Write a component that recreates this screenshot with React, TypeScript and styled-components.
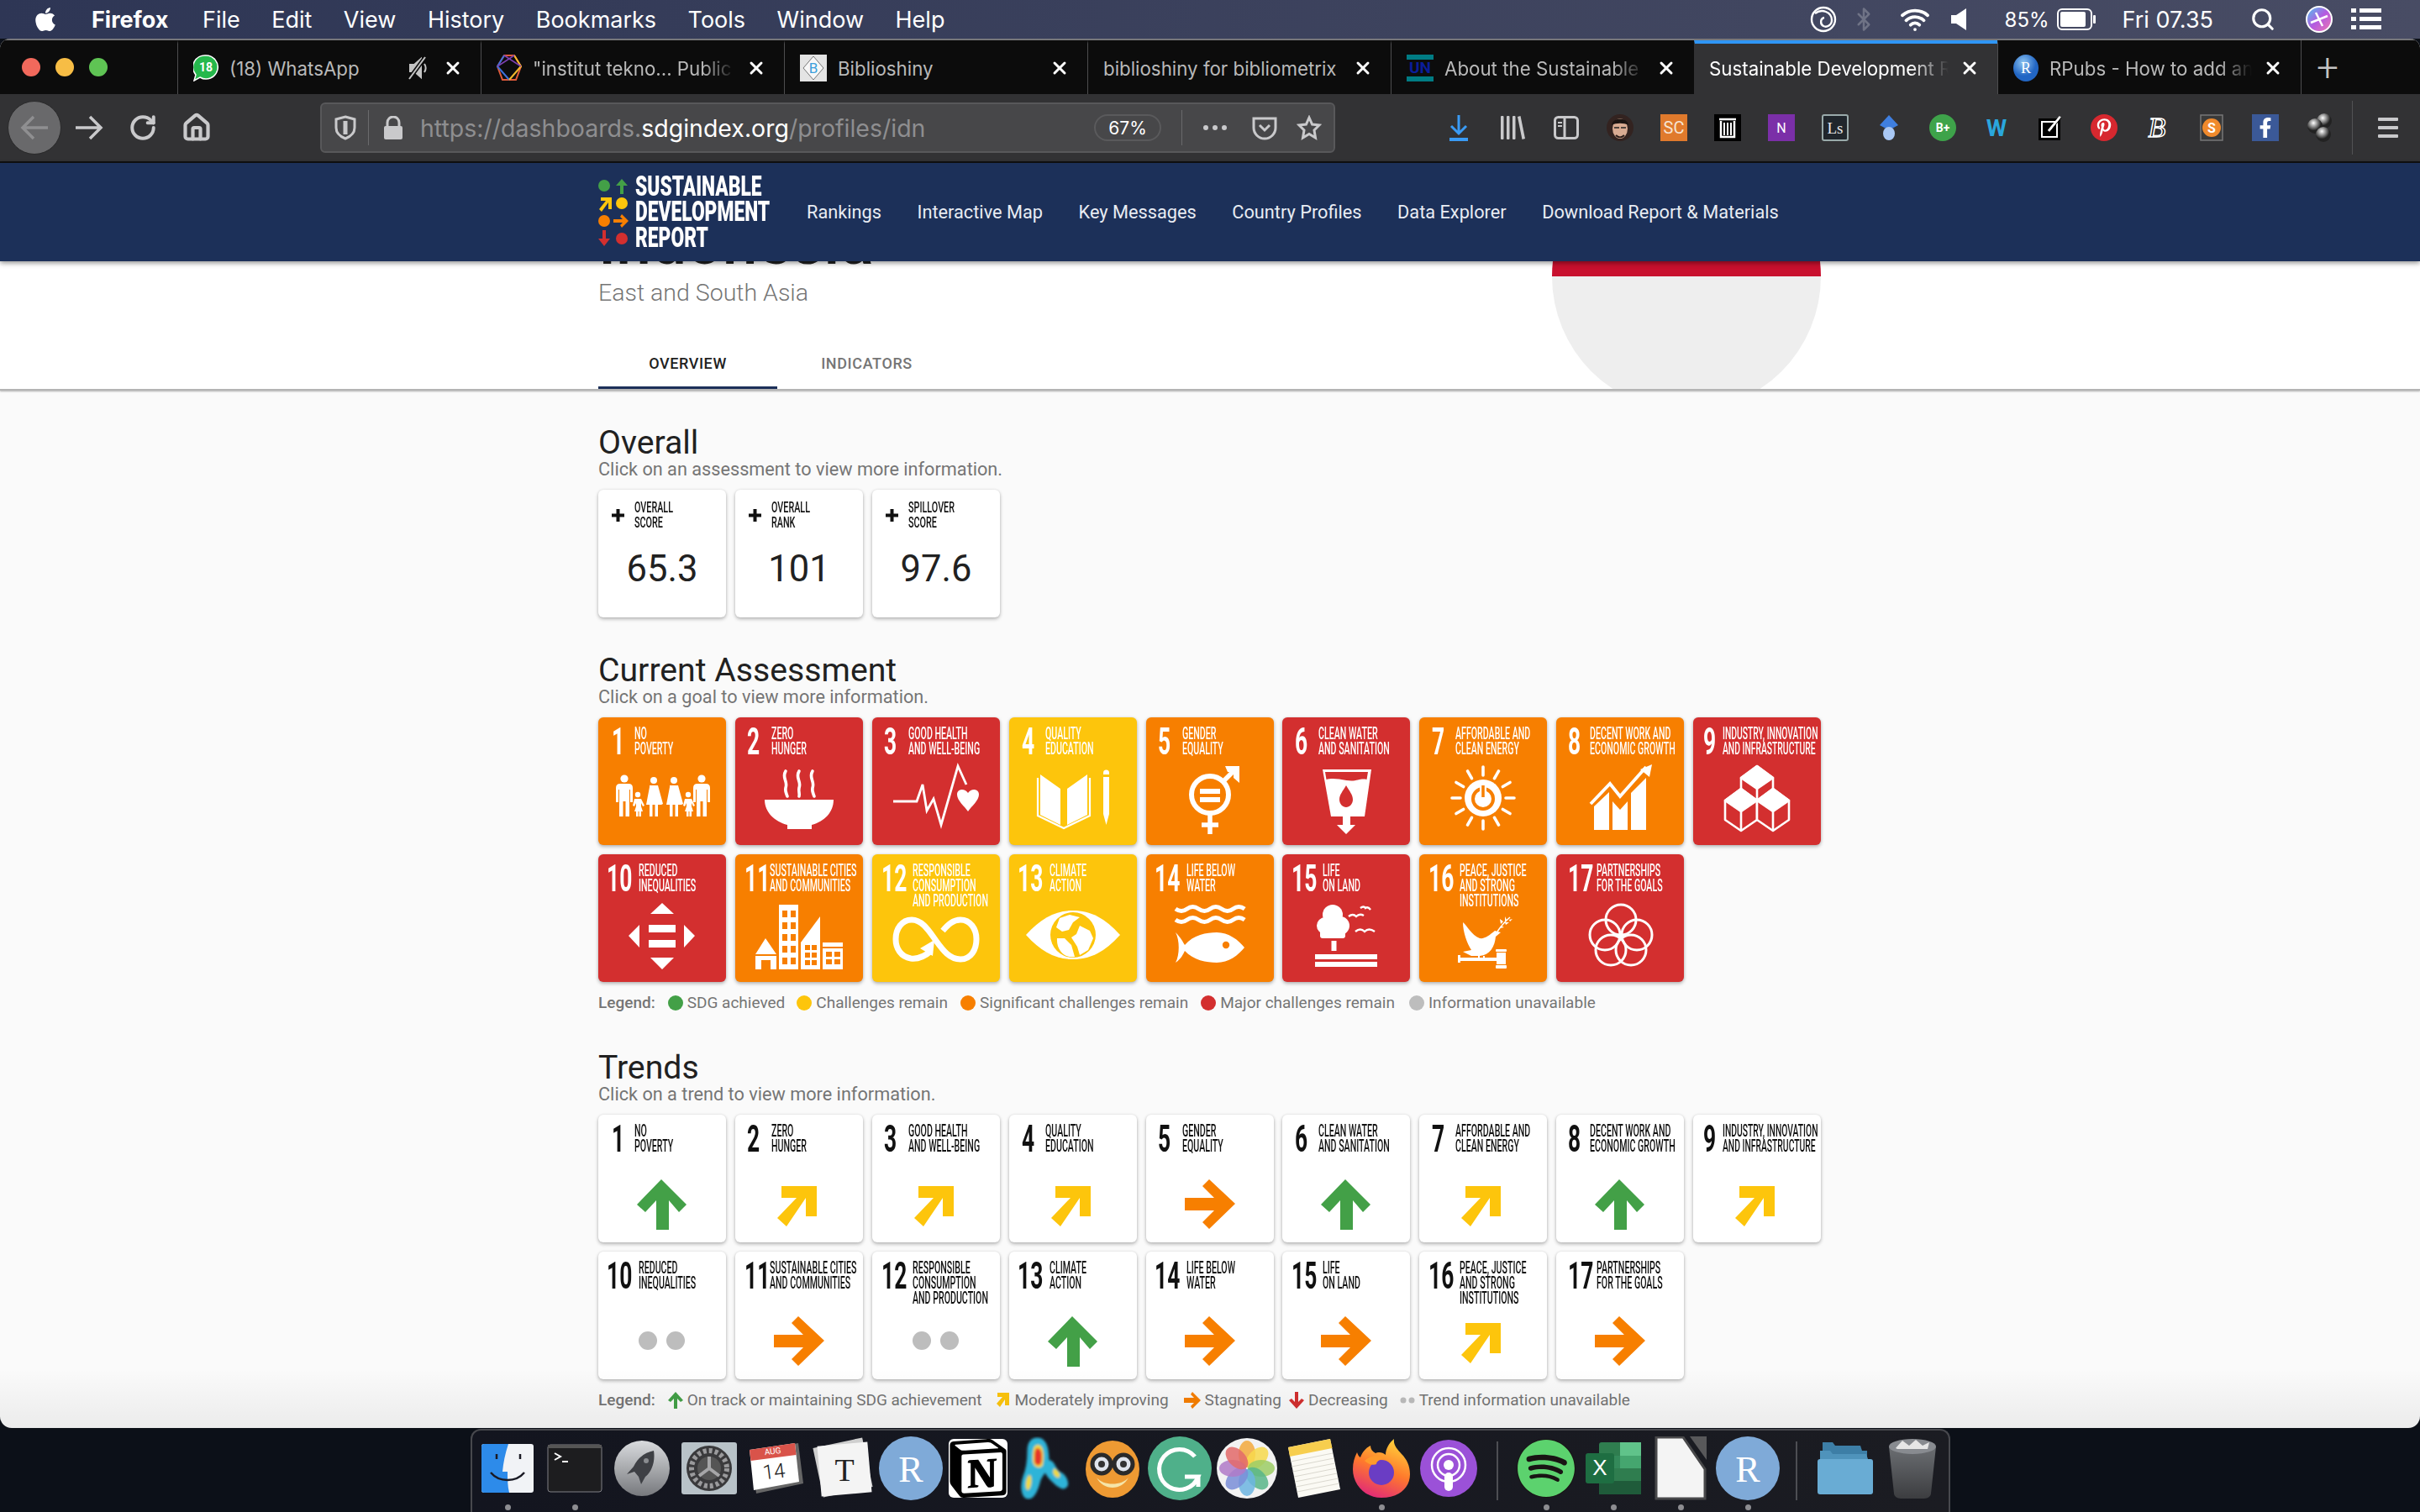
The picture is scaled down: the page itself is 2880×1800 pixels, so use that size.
import React from 'react';
import styled, { createGlobalStyle } from 'styled-components';
import { FaApple, FaFacebookF, FaPinterestP, FaSpotify } from 'react-icons/fa';
import { SiNotion } from 'react-icons/si';
import { Bluetooth, House, RotateCw, Search, Wifi, X } from 'lucide-react';

const RED = '#d32f2f';
const ORANGE = '#f77f00';
const YELLOW = '#fdc50c';
const GREEN = '#43a047';
const GREY = '#bdbdbd';

type Trend = 'up' | 'right' | 'diag' | 'dots';

interface Goal {
  n: number;
  lines: string[];
  color: string;
  trend: Trend;
  numX: number;
  labelX: number;
  squeeze?: number;
}

const goals: Goal[] = [
  { n: 1, lines: ['NO', 'POVERTY'], color: ORANGE, trend: 'up', numX: 16, labelX: 43 },
  { n: 2, lines: ['ZERO', 'HUNGER'], color: RED, trend: 'diag', numX: 14, labelX: 43 },
  { n: 3, lines: ['GOOD HEALTH', 'AND WELL-BEING'], color: RED, trend: 'diag', numX: 14, labelX: 43 },
  { n: 4, lines: ['QUALITY', 'EDUCATION'], color: YELLOW, trend: 'diag', numX: 15, labelX: 43 },
  { n: 5, lines: ['GENDER', 'EQUALITY'], color: ORANGE, trend: 'right', numX: 14, labelX: 43 },
  { n: 6, lines: ['CLEAN WATER', 'AND SANITATION'], color: RED, trend: 'up', numX: 15, labelX: 43 },
  { n: 7, lines: ['AFFORDABLE AND', 'CLEAN ENERGY'], color: ORANGE, trend: 'diag', numX: 15, labelX: 43 },
  { n: 8, lines: ['DECENT WORK AND', 'ECONOMIC GROWTH'], color: ORANGE, trend: 'up', numX: 14, labelX: 40 },
  { n: 9, lines: ['INDUSTRY, INNOVATION', 'AND INFRASTRUCTURE'], color: RED, trend: 'diag', numX: 12, labelX: 35, squeeze: 0.53 },
  { n: 10, lines: ['REDUCED', 'INEQUALITIES'], color: RED, trend: 'dots', numX: 10, labelX: 48 },
  { n: 11, lines: ['SUSTAINABLE CITIES', 'AND COMMUNITIES'], color: ORANGE, trend: 'right', numX: 11, labelX: 41 },
  { n: 12, lines: ['RESPONSIBLE', 'CONSUMPTION', 'AND PRODUCTION'], color: YELLOW, trend: 'dots', numX: 11, labelX: 48 },
  { n: 13, lines: ['CLIMATE', 'ACTION'], color: YELLOW, trend: 'up', numX: 10, labelX: 48 },
  { n: 14, lines: ['LIFE BELOW', 'WATER'], color: ORANGE, trend: 'right', numX: 10, labelX: 48 },
  { n: 15, lines: ['LIFE', 'ON LAND'], color: RED, trend: 'right', numX: 11, labelX: 48 },
  { n: 16, lines: ['PEACE, JUSTICE', 'AND STRONG', 'INSTITUTIONS'], color: ORANGE, trend: 'diag', numX: 11, labelX: 48 },
  { n: 17, lines: ['PARTNERSHIPS', 'FOR THE GOALS'], color: RED, trend: 'right', numX: 14, labelX: 48 },
];

const GlobalStyle = createGlobalStyle`
  html, body {
    margin: 0;
    padding: 0;
    background: #0c1018;
  }
  * {
    box-sizing: border-box;
  }
`;

const Desktop = styled.div`
  width: 2880px;
  height: 1800px;
  overflow: hidden;
  display: flex;
  flex-direction: column;
  background: #0c1018;
  font-family: Roboto, 'Liberation Sans', sans-serif;
`;

/* ---------- mac menu bar ---------- */

const MenuBar = styled.div`
  height: 46px;
  flex: none;
  display: flex;
  align-items: center;
  padding: 0 46px 0 38px;
  background: linear-gradient(90deg, #2e3655, #484c64);
  color: #fff;
  font: 400 27px Inter, 'Liberation Sans', sans-serif;
`;

const MenuList = styled.div`
  display: flex;
  align-items: center;
  gap: 37.5px;
  margin-left: 39px;
`;

const AppName = styled.span`
  font-weight: 700;
  margin-right: 3px;
`;

const Status = styled.div`
  margin-left: auto;
  display: flex;
  align-items: center;
  height: 100%;
`;

const StatusItem = styled.span<{ $ml: number; $small?: boolean }>`
  display: flex;
  align-items: center;
  margin-left: ${(p) => p.$ml}px;
  ${(p) => p.$small && 'font-size: 24px;'}
`;

/* ---------- browser window ---------- */

const BrowserWindow = styled.div`
  height: 1654px;
  flex: none;
  display: flex;
  flex-direction: column;
  overflow: hidden;
  border-radius: 12px 12px 14px 14px;
  background: #fafafa;
`;

const TabStrip = styled.div`
  height: 66px;
  flex: none;
  display: flex;
  background: #0c0c0c;
  border-top: 2px solid #77777b;
`;

const Lights = styled.div`
  width: 211px;
  flex: none;
  display: flex;
  align-items: center;
  gap: 18px;
  padding-left: 26px;
`;

const Light = styled.span<{ $c: string }>`
  width: 22px;
  height: 22px;
  border-radius: 50%;
  background: ${(p) => p.$c};
`;

const Tab = styled.div<{ $active?: boolean; $noIcon?: boolean }>`
  width: 361px;
  flex: none;
  display: flex;
  align-items: center;
  gap: 13px;
  padding: 0 21px 2px ${(p) => (p.$active ? 17 : 18)}px;
  border-left: 1px solid ${(p) => (p.$active ? 'transparent' : '#4d4d4f')};
  border-top: 4px solid ${(p) => (p.$active ? '#2f96f5' : 'transparent')};
  background: ${(p) => (p.$active ? '#323234' : 'transparent')};
  color: ${(p) => (p.$active ? '#fff' : '#b9b9b9')};
  font: 400 22.3px Inter, 'Liberation Sans', sans-serif;
`;

const TabTitle = styled.span<{ $fade?: boolean }>`
  flex: 1;
  min-width: 0;
  overflow: hidden;
  white-space: nowrap;
  ${(p) => p.$fade && 'mask-image: linear-gradient(90deg, #000 84%, transparent 100%);'}
`;

const NewTab = styled.div`
  width: 145px;
  flex: none;
  display: flex;
  align-items: center;
  padding-left: 18px;
  border-left: 1px solid #4d4d4f;
  color: #c4c4c4;
  font-size: 46px;
  font-weight: 300;
`;

const Toolbar = styled.div`
  height: 82px;
  flex: none;
  display: flex;
  align-items: center;
  padding-left: 9px;
  background: #323234;
  color: #c9c9cb;
  border-bottom: 2px solid #101010;
`;

const BackButton = styled.div`
  width: 64px;
  height: 64px;
  border-radius: 50%;
  background: #69696b;
  border: 1px solid #29292a;
  display: flex;
  align-items: center;
  justify-content: center;
  margin-right: 1px;
`;

const ToolSlot = styled.div`
  width: 64px;
  height: 64px;
  flex: none;
  display: flex;
  align-items: center;
  justify-content: center;
  svg {
    overflow: visible;
  }
`;

const UrlBar = styled.div`
  width: 1208px;
  height: 60px;
  flex: none;
  margin: 0 115px;
  display: flex;
  align-items: center;
  background: #474749;
  border: 2px solid #58585a;
  border-radius: 6px;
  padding-left: 15px;
`;

const UrlDivider = styled.span<{ $ml: number; $mr: number }>`
  width: 1px;
  height: 42px;
  background: #6a6a6c;
  margin: 0 ${(p) => p.$mr}px 0 ${(p) => p.$ml}px;
`;

const UrlText = styled.span`
  width: 802px;
  margin-left: 21px;
  color: #8e8e90;
  font: 400 28.5px Inter, 'Liberation Sans', sans-serif;
  white-space: nowrap;
  b {
    color: #fff;
    font-weight: 400;
  }
`;

const ZoomPill = styled.span`
  width: 80px;
  height: 32px;
  border: 2px solid #5a5a5c;
  border-radius: 16px;
  display: flex;
  align-items: center;
  justify-content: center;
  color: #fff;
  font: 400 21px Inter, 'Liberation Sans', sans-serif;
`;

const Dots = styled.span`
  display: flex;
  gap: 5px;
  margin: 0 22px 0 25px;
  i {
    width: 6px;
    height: 6px;
    border-radius: 50%;
    background: #c9c9cb;
  }
`;

const UrlGlyph = styled.span<{ $ml: number }>`
  display: flex;
  margin-left: ${(p) => p.$ml}px;
`;

const ExtList = styled.div`
  display: flex;
  flex: none;
`;

const Separator = styled.span`
  width: 1px;
  height: 64px;
  margin: 0 30px 0 7px;
  background: #525254;
`;

const Burger = styled.span`
  display: flex;
  flex-direction: column;
  gap: 6px;
  i {
    width: 24px;
    height: 4px;
    background: #c9c9cb;
    border-radius: 1px;
  }
`;

/* ---------- site nav ---------- */

const SiteNav = styled.nav`
  height: 117px;
  flex: none;
  position: relative;
  z-index: 2;
  display: flex;
  align-items: center;
  padding-left: 712px;
  background: #1c3059;
  box-shadow: 0 2px 6px rgba(0, 0, 0, 0.45);
`;

const Logo = styled.div`
  width: 248px;
  flex: none;
  display: flex;
  align-items: center;
  gap: 6px;
  svg {
    flex: none;
  }
`;

const LogoWords = styled.div`
  display: flex;
  flex-direction: column;
  min-width: 0;
  color: #fff;
  font: 900 33px/30.5px Roboto, sans-serif;
`;

const LogoWord = styled.span`
  display: block;
  white-space: nowrap;
  transform: scaleX(0.69);
  transform-origin: left center;
`;

const NavLinks = styled.div`
  display: flex;
  gap: 42.5px;
  color: #e8ecf3;
  font-size: 21.75px;
`;

/* ---------- page ---------- */

const Page = styled.main`
  flex: 1;
  min-height: 0;
  position: relative;
  overflow: hidden;
  &::after {
    content: '';
    position: absolute;
    left: 0;
    right: 0;
    bottom: 0;
    height: 70px;
    background: linear-gradient(rgba(0, 0, 0, 0), rgba(0, 0, 0, 0.06));
    pointer-events: none;
  }
`;

const CountryHeader = styled.header`
  height: 154px;
  overflow: hidden;
  padding: 0 713px 0 712px;
  display: flex;
  justify-content: space-between;
  background: #fff;
  border-bottom: 2px solid #b4b4b4;
  box-shadow: 0 1px 2px rgba(0, 0, 0, 0.3);
`;

const CountryInfo = styled.div`
  display: flex;
  flex-direction: column;
  height: 152px;
`;

const CountryName = styled.h1`
  margin: -53px 0 0;
  height: 63px;
  color: #212121;
  font-size: 75px;
  font-weight: 500;
  line-height: 60px;
`;

const Region = styled.div`
  margin-top: 12px;
  color: #757575;
  font-size: 28.5px;
  font-weight: 300;
  line-height: 32px;
`;

const Tabs = styled.div`
  margin-top: auto;
  display: flex;
`;

const PageTab = styled.div<{ $active?: boolean }>`
  width: 213px;
  height: 54px;
  display: flex;
  align-items: center;
  justify-content: center;
  padding-bottom: 5px;
  color: ${(p) => (p.$active ? '#212121' : '#757575')};
  font-size: 18px;
  font-weight: 500;
  letter-spacing: 0.6px;
  border-bottom: 3px solid ${(p) => (p.$active ? '#1c3059' : 'transparent')};
`;

const FlagDisc = styled.div`
  width: 320px;
  height: 320px;
  flex: none;
  margin-top: -142px;
  border-radius: 50%;
  background: linear-gradient(#c8102e 50%, #eeeeee 50%);
`;

const Body = styled.div`
  width: 1455px;
  margin-left: 712px;
`;

const Section = styled.section<{ $mt: number }>`
  margin-top: ${(p) => p.$mt}px;
`;

const Heading = styled.h2`
  margin: 0;
  padding-top: 1px;
  color: #212121;
  font-size: 39.2px;
  font-weight: 400;
  line-height: 36px;
`;

const Sub = styled.p`
  margin: 2px 0 12px;
  color: #757575;
  font-size: 21.7px;
  line-height: 24px;
`;

const OverallRow = styled.div`
  display: flex;
  gap: 11px;
`;

const Card = styled.div`
  width: 152px;
  height: 152px;
  border-radius: 6px;
  background: #fff;
  box-shadow: 0 2px 4px rgba(0, 0, 0, 0.28), 0 0 3px rgba(0, 0, 0, 0.08);
`;

const CardHead = styled.div`
  display: flex;
  align-items: center;
  height: 56px;
  padding: 4px 0 0 16px;
  gap: 12px;
  color: #111;
`;

const CardLabel = styled.div`
  font-size: 18px;
  font-weight: 500;
  line-height: 18.5px;
`;

const CardLine = styled.span`
  display: block;
  white-space: nowrap;
  transform: scaleX(0.6);
  transform-origin: left center;
`;

const CardValue = styled.div`
  text-align: center;
  margin-top: 14px;
  color: #212121;
  font-size: 43.5px;
  line-height: 50px;
`;

const GoalGrid = styled.div`
  display: grid;
  grid-template-columns: repeat(9, 152px);
  gap: 11px 10.9px;
`;

const Tile = styled.div<{ $bg: string }>`
  width: 152px;
  height: 152px;
  border-radius: 6px;
  display: flex;
  flex-direction: column;
  background: ${(p) => p.$bg};
  color: ${(p) => (p.$bg === '#fff' ? '#111' : '#fff')};
  box-shadow: 0 2px 4px rgba(0, 0, 0, 0.28), 0 0 3px rgba(0, 0, 0, 0.08);
`;

const TileHead = styled.div<{ $left: number }>`
  height: 52px;
  flex: none;
  display: flex;
  padding: 11px 0 0 ${(p) => p.$left}px;
`;

const TileNumber = styled.span<{ $w: number }>`
  width: ${(p) => p.$w}px;
  flex: none;
  display: block;
  font-size: 44px;
  font-weight: 700;
  line-height: 37px;
  white-space: nowrap;
  transform: scaleX(0.6);
  transform-origin: left center;
`;

const TileLabel = styled.div`
  font-size: 19.5px;
  font-weight: 500;
  line-height: 18.2px;
`;

const TileLine = styled.span<{ $squeeze?: number }>`
  display: block;
  white-space: nowrap;
  transform: scaleX(${(p) => p.$squeeze ?? 0.545});
  transform-origin: left center;
`;

const TileArt = styled.svg`
  display: block;
  width: 152px;
  height: 100px;
  flex: none;
  overflow: visible;
`;

const Legend = styled.div`
  display: flex;
  align-items: center;
  height: 24px;
  margin-top: 13px;
  color: #757575;
  font-size: 19px;
  line-height: 24px;
  white-space: nowrap;
`;

const LegendTitle = styled.span`
  font-weight: 500;
  margin-right: 15px;
`;

const LegendItem = styled.span<{ $gap: number }>`
  display: flex;
  align-items: center;
  gap: 5px;
  margin-right: ${(p) => p.$gap}px;
`;

const LegendDot = styled.i<{ $c: string }>`
  width: 18px;
  height: 18px;
  border-radius: 50%;
  background: ${(p) => p.$c};
`;

/* ---------- dock ---------- */

const DockArea = styled.div`
  flex: 1;
  display: flex;
  justify-content: center;
  align-items: flex-start;
  padding-top: 1px;
  background: #0c1018;
`;

const DockPanel = styled.div`
  width: 1761px;
  height: 100px;
  display: flex;
  justify-content: center;
  background: linear-gradient(90deg, #13151f, #1b1c22);
  border: 2px solid #47484d;
  border-bottom: none;
  border-radius: 12px 12px 0 0;
`;

const DockSlot = styled.div`
  width: 80px;
  flex: none;
  display: flex;
  flex-direction: column;
  align-items: center;
  padding-top: 7px;
`;

const DockBox = styled.div`
  width: 78px;
  height: 76px;
  display: flex;
  align-items: center;
  justify-content: center;
  color: #fff;
`;

const DockDot = styled.i<{ $on?: boolean }>`
  width: 7px;
  height: 7px;
  margin-top: 5px;
  border-radius: 50%;
  background: ${(p) => (p.$on ? '#8d8d91' : 'transparent')};
`;

const DockDivider = styled.div`
  width: 36px;
  flex: none;
  display: flex;
  justify-content: center;
  padding-top: 13px;
  &::before {
    content: '';
    width: 2px;
    height: 70px;
    background: #4d4e53;
  }
`;

const SquareIcon = styled.span<{ $bg: string; $color: string; $size: number }>`
  width: 32px;
  height: 32px;
  display: flex;
  align-items: center;
  justify-content: center;
  background: ${(p) => p.$bg};
  color: ${(p) => p.$color};
  font: 400 ${(p) => p.$size}px Roboto, sans-serif;
`;

const RoundBrand = styled.span<{ $bg: string; $color: string; $size: number }>`
  width: ${(p) => p.$size}px;
  height: ${(p) => p.$size}px;
  display: flex;
  align-items: center;
  justify-content: center;
  border-radius: 50%;
  color: ${(p) => p.$color};
  background: ${(p) => p.$bg};
`;

const NotionBox = styled.span`
  display: flex;
  color: #000;
  background: #fff;
  border-radius: 6px;
`;

/* ---------- drawings ---------- */

const Man = ({ x }: { x: number }) => (
  <g>
    <circle cx={x} cy={73} r={4.6} />
    <path d={`M${x - 10} 84q0-5 5-5h10q5 0 5 5v17h-3v-15h-1v32h-4.500v-18h-3v18h-4.500v-32h-1v15h-3z`} />
  </g>
);

const Woman = ({ x }: { x: number }) => (
  <g>
    <circle cx={x} cy={75} r={4} />
    <path d={`M${x - 5} 81h10l6 22-2 1-3-9 3 9h-4v14h-3.500v-14h-3v14h-3.500v-14h-4l4-21z`} />
  </g>
);

const Child = ({ x }: { x: number }) => (
  <g>
    <circle cx={x} cy={92} r={3.2} />
    <path d={`M${x - 4} 97h8l4 8-2 1-2-4v4l2 6h-2v6h-2.500v-6h-1v6h-2.500v-6h-2l2-6v-4l-2 4-2-1z`} />
  </g>
);

const Cube = ({ cx, t, bg }: { cx: number; t: number; bg: string }) => (
  <g stroke="#fff" strokeWidth={2.600} strokeLinejoin="round">
    <path d={`M${cx} ${t}l19 14v23l-19 13-19-13v-23z`} fill={bg} />
    <path d={`M${cx} ${t}l19 14-19 13-19-13z`} fill="#fff" />
    <path d={`M${cx} ${t + 27}v23`} fill="none" />
  </g>
);

const range = (n: number) => Array.from({ length: n }, (_, i) => i);

const GoalArt = ({ n, bg }: { n: number; bg: string }) => {
  switch (n) {
    case 1:
      return (
        <g fill="#fff">
          <Man x={31} />
          <Child x={47} />
          <Woman x={66} />
          <Woman x={90} />
          <Child x={107} />
          <Man x={123} />
        </g>
      );
    case 2:
      return (
        <g>
          <g fill="none" stroke="#fff" strokeWidth={3.600} strokeLinecap="round">
            <path d="M60 64c-5 8 3 12 0 20-1 4 1 7 2 10" />
            <path d="M76 64c-5 8 3 12 0 20-1 4 1 7 0 10" />
            <path d="M92 64c-5 8 3 12 0 20-1 4 1 7 2 10" />
          </g>
          <path fill="#fff" d="M35 98h82c0 15-11 26-26 30v5H62v-5c-15-4-27-15-27-30z" />
        </g>
      );
    case 3:
      return (
        <g>
          <path fill="none" stroke="#fff" strokeWidth={2.800} strokeLinejoin="miter" d="M25 100h28l7-20 5 31 8-14 9 31 20-70 10 22" />
          <path fill="#fff" d="M114 112c-4-6-13-13-13-20 0-7 9-8 13-2 4-6 13-5 13 2 0 7-9 14-13 20z" />
        </g>
      );
    case 4:
      return (
        <g>
          <path fill="#fff" d="M37 68l24 17v43l-24-12zM93 68L69 85v43l24-12z" />
          <path fill="none" stroke="#fff" strokeWidth={2.200} d="M34 72v45l31 15 31-15V72" />
          <path fill="#fff" d="M112 71h7v44l-3.500 13-3.500-13zM112 66a3.500 3.500 0 0 1 7 0v2h-7z" />
        </g>
      );
    case 5:
      return (
        <g fill="none" stroke="#fff">
          <circle cx={76} cy={92} r={22} strokeWidth={6} />
          <path strokeWidth={5.500} d="M76 114v25M66 128h20M92 76l16-16" />
          <path fill="#fff" stroke="none" d="M94 58h17v20l-7-6v-7h-7z" />
          <path fill="#fff" stroke="none" d="M64 85h24v6H64zM64 95h24v6H64z" />
        </g>
      );
    case 6:
      return (
        <g>
          <path fill="#fff" d="M48 62h58l-8 56H58z" />
          <path fill={bg} d="M51 65h51l-1.500 9c-8-2-12 3-24 1-10-2-18-3-24-1z" />
          <path fill={bg} d="M76 81c4 7 8 11 8 17 0 5-4 9-8 9s-8-4-8-9c0-6 4-10 8-17z" />
          <path fill="#fff" d="M72 118h9v10h6l-11 11-11-11h7z" />
        </g>
      );
    case 7:
      return (
        <g>
          <circle cx={76} cy={96} r={22} fill="#fff" />
          <g stroke="#fff" strokeWidth={3.600} strokeLinecap="round">
            {range(12).map((i) => (
              <line key={i} x1={76} y1={69} x2={76} y2={59} transform={`rotate(${i * 30} 76 96)`} />
            ))}
          </g>
          <circle cx={76} cy={97} r={12} fill="none" stroke={bg} strokeWidth={4} />
          <path d="M76 80v16" stroke="#fff" strokeWidth={8} />
          <path d="M76 81v14" stroke={bg} strokeWidth={3.500} />
        </g>
      );
    case 8:
      return (
        <g fill="#fff">
          <path d="M45 106l18-17v45H45zM67 100l9 10 9-10v34H67zM89 90l18-18v62H89z" />
          <path fill="none" stroke="#fff" strokeWidth={3.800} d="M41 103l23-24 12 15 31-35" />
          <path d="M100 62l14-6-3 15z" />
        </g>
      );
    case 9:
      return (
        <g>
          <Cube cx={76} t={58} bg={bg} />
          <Cube cx={57} t={85} bg={bg} />
          <Cube cx={95} t={85} bg={bg} />
        </g>
      );
    case 10:
      return (
        <path
          fill="#fff"
          d="M76 58l14 13H62zM76 137l-14-14h28zM36 97l13-13v27zM115 97l-13-13v27zM60 84h32v9H60zM60 102h32v9H60z"
        />
      );
    case 11:
      return (
        <g fill="#fff">
          <rect x={52} y={60} width={23} height={77} />
          {range(5).map((r) =>
            [0, 1].map((c) => <rect key={`${r}${c}`} x={56 + c * 10} y={67 + r * 14} width={6} height={8} fill={bg} />),
          )}
          <path d="M24 119l12-19 13 19zM24 121h25v16h-7v-11H31v11h-7z" />
          <path d="M101 74v63H78v-32z" />
          {range(3).map((r) =>
            [0, 1].map((c) => <rect key={`s${r}${c}`} x={83 + c * 8} y={108 + r * 9} width={6} height={6} fill={bg} />),
          )}
          <path d="M104 105h24v5h-24zM104 112h24v25h-24z" />
          <path fill={bg} d="M108 116h7v6h-7zM118 116h7v6h-7zM108 125h7v6h-7zM118 125h7v6h-7z" />
        </g>
      );
    case 12:
      return (
        <g>
          <path
            fill="none"
            stroke="#fff"
            strokeWidth={7}
            d="M70 115c-8 7-16 10-24 9-12-2-18-12-18-23 0-12 7-23 19-23 13 0 21 14 29 25s16 22 29 22 19-12 19-24-7-23-19-23c-9 0-15 6-21 13"
          />
          <path fill="#fff" d="M74 102l-2 19-15-9z" />
        </g>
      );
    case 13:
      return (
        <g>
          <path fill="#fff" d="M20 96c18-20 35-29 56-29s38 9 56 29c-18 20-35 29-56 29s-38-9-56-29z" />
          <circle cx={76} cy={96} r={27} fill={bg} />
          <path fill="#fff" d="M60 76l12-4 12 3-8 6-5 9-8 2-7-5zM57 100l9 0 8 8 4 14c-12 2-22-8-21-22zM84 85l12 6 4 9-6 14-10 6-3-10-7-11 6-4z" />
        </g>
      );
    case 14:
      return (
        <g>
          <path
            fill="none"
            stroke="#fff"
            strokeWidth={5}
            d="M35 65q7 5 13.700 0t13.700 0 13.700 0 13.700 0 13.700 0 13.700 0M35 78q7 5 13.700 0t13.700 0 13.700 0 13.700 0 13.700 0 13.700 0"
          />
          <path fill="#fff" d="M35 93c7 7 9 12 11 15 10-12 26-15 38-15 14 0 26 9 33 18-7 9-19 18-33 18-12 0-28-3-38-14-2 4-4 9-11 14 5-9 5-27 0-36z" />
          <circle cx={95} cy={108} r={4.200} fill={bg} />
        </g>
      );
    case 15:
      return (
        <g fill="#fff">
          <circle cx={60} cy={72} r={12} />
          <circle cx={51} cy={85} r={10} />
          <circle cx={69} cy={85} r={11} />
          <rect x={45} y={84} width={30} height={16} rx={3} />
          <rect x={58.500} y={103} width={6} height={12} />
          <rect x={39} y={119} width={74} height={6} />
          <rect x={39} y={128} width={74} height={6} />
          <g fill="none" stroke="#fff" strokeWidth={2.400}>
            <path d="M93 64q4-3 6 0 3-2 6 2" />
            <path d="M79 74q5-4 9 0 4-4 9-1" />
            <path d="M87 92q6-5 11 0 5-5 12 0" />
          </g>
        </g>
      );
    case 16:
      return (
        <g fill="#fff">
          <path d="M52 81c5 4 10 15 20 19 6 1 12-4 18-9l7 2-6 5c-1 12-7 22-19 23H62l-10-5 10-2c-5-8-10-21-10-33z" />
          <path d="M70 121h2v4h-2zM76 121h2v4h-2z" />
          <rect x={46} y={123} width={46} height={4} />
          <rect x={46} y={120} width={3} height={9} />
          <rect x={91} y={113} width={13} height={3} rx={1} />
          <rect x={92} y={117} width={11} height={14} />
          <rect x={91} y={132} width={13} height={4} rx={1} />
          <path fill="none" stroke="#fff" strokeWidth={1.600} d="M93 92c4-6 9-12 15-17" />
          <path d="M100 80l-4-3 1 6zM104 78l-2-4 0 6zM103 84l4-3-5 0zM108 80l3-3-4 1zM96 88l5-1-4-2z" />
        </g>
      );
    default:
      return (
        <g fill="none" stroke="#fff" strokeWidth={3}>
          <circle cx={77} cy={78} r={18} />
          <circle cx={58} cy={96} r={18} />
          <circle cx={96} cy={96} r={18} />
          <circle cx={65} cy={114} r={18} />
          <circle cx={89} cy={114} r={18} />
        </g>
      );
  }
};

const TrendArt = ({ trend }: { trend: Trend }) => {
  if (trend === 'up')
    return <path fill={GREEN} d="M75 77l30 30-9 9-12-14v35H69v-35L56 116l-10-9z" />;
  if (trend === 'right')
    return <path fill={ORANGE} d="M106 106l-31 30-8-8 14-14H46V99h35L67 85l8-8z" />;
  if (trend === 'diag')
    return <path fill={YELLOW} d="M55 85h42v36H84V99l-23 34-11-10 23-24H55z" />;
  return (
    <g fill={GREY}>
      <ellipse cx={59} cy={106} rx={11} ry={11} />
      <ellipse cx={92} cy={106} rx={11} ry={11} />
    </g>
  );
};

const GoalTile = ({ goal, trendMode }: { goal: Goal; trendMode?: boolean }) => {
  const bg = trendMode ? '#fff' : goal.color;
  return (
    <Tile $bg={bg}>
      <TileHead $left={goal.numX}>
        <TileNumber $w={goal.labelX - goal.numX}>{goal.n}</TileNumber>
        <TileLabel>
          {goal.lines.map((l) => (
            <TileLine key={l} $squeeze={goal.squeeze}>
              {l}
            </TileLine>
          ))}
        </TileLabel>
      </TileHead>
      <TileArt viewBox="0 52 152 100">{trendMode ? <TrendArt trend={goal.trend} /> : <GoalArt n={goal.n} bg={bg} />}</TileArt>
    </Tile>
  );
};

const LogoMark = () => (
  <svg width={38} height={84} viewBox="0 0 38 84">
    <circle cx={7} cy={10} r={7} fill={GREEN} />
    <path d="M28 2l7 8h-5v10h-4V10h-5z" fill={GREEN} />
    <path d="M3 24h13v14h-4v-8l-8 11-3-3 8-10H3z" fill={YELLOW} />
    <circle cx={28} cy={31} r={7} fill={YELLOW} />
    <circle cx={7} cy={52} r={7} fill={ORANGE} />
    <path d="M28 44l8 8-8 8-2-3 3-3H18v-4h11l-3-3z" fill={ORANGE} />
    <path d="M5 63h4v10h5l-7 9-7-9h5z" fill={RED} />
    <circle cx={28} cy={73} r={7} fill={RED} />
  </svg>
);

const Favicon = ({ kind }: { kind: string }) => {
  switch (kind) {
    case 'whatsapp':
      return (
        <svg width={30} height={32} viewBox="0 0 30 32">
          <path d="M15 1a14 14 0 1 1-7 26L1 31l2-7A14 14 0 0 1 15 1z" fill="#25b84c" stroke="#fff" strokeWidth={1.500} />
          <text x={15} y={20} textAnchor="middle" fill="#fff" fontSize={14} fontWeight={700} fontFamily="Roboto">
            18
          </text>
        </svg>
      );
    case 'hex':
      return (
        <svg width={30} height={32} viewBox="0 0 30 32" fill="none" strokeWidth={2}>
          <path d="M9 1h12l8 13-6 16H7L1 14z" stroke="#e05a3a" />
          <path d="M9 1L1 14l14 16" stroke="#3e6fd8" />
          <path d="M21 1l8 13-14 16" stroke="#f3b82c" />
          <path d="M9 1l20 13M21 1L1 14" stroke="#7a3fb0" strokeWidth={1.500} />
        </svg>
      );
    case 'biblio':
      return (
        <svg width={32} height={32} viewBox="0 0 32 32">
          <rect width={32} height={32} fill="#e4e4e4" />
          <path d="M16 2l12 14-12 14L4 16z" fill="#f7f7f7" stroke="#777" strokeWidth={1} />
          <text x={16} y={22} textAnchor="middle" fill="#3aa0dc" fontSize={17} fontFamily="Roboto">
            B
          </text>
        </svg>
      );
    case 'un':
      return (
        <svg width={32} height={32} viewBox="0 0 32 32">
          <rect width={32} height={6} fill="#007c84" />
          <rect y={26} width={32} height={6} fill="#007c84" />
          <text x={16} y={22} textAnchor="middle" fill="#0a1d9a" fontSize={19} fontWeight={700} fontFamily="Roboto">
            UN
          </text>
        </svg>
      );
    default:
      return (
        <svg width={30} height={32} viewBox="0 0 30 32">
          <defs>
            <radialGradient id="ball" cx="0.4" cy="0.3">
              <stop offset="0" stopColor="#8fc6f2" />
              <stop offset="1" stopColor="#2266c4" />
            </radialGradient>
          </defs>
          <ellipse cx={15} cy={16} rx={15} ry={16} fill="url(#ball)" />
          <text x={15} y={22} textAnchor="middle" fill="#fff" fontSize={18} fontFamily="Liberation Serif">
            R
          </text>
        </svg>
      );
  }
};

const ExtIcon = ({ k }: { k: string }) => {
  switch (k) {
    case 'download':
      return (
        <svg width={30} height={32} viewBox="0 0 30 32" fill="none" stroke="#3a9bf5" strokeWidth={3}>
          <path d="M15 1v21M6 14l9 9 9-9" />
          <path d="M4 30h22" strokeWidth={4} />
        </svg>
      );
    case 'library':
      return (
        <svg width={30} height={30} viewBox="0 0 30 30" fill="#c9c9cb">
          <rect x={1} y={1} width={3.500} height={28} rx={1} />
          <rect x={8} y={1} width={3.500} height={28} rx={1} />
          <rect x={15} y={1} width={3.500} height={28} rx={1} />
          <path d="M21 2l3.500-1 5.500 27-3.500 1z" />
        </svg>
      );
    case 'sidebar':
      return (
        <svg width={30} height={30} viewBox="0 0 30 30" fill="none" stroke="#c9c9cb" strokeWidth={3}>
          <rect x={1.500} y={2.500} width={27} height={25} rx={4} />
          <path d="M13 3v24" />
          <path d="M5 9h5M5 13h5" strokeWidth={2} />
        </svg>
      );
    case 'avatar':
      return (
        <svg width={32} height={32} viewBox="0 0 32 32">
          <circle cx={16} cy={16} r={16} fill="#332320" />
          <ellipse cx={16} cy={17} rx={9} ry={12} fill="#d9ab92" />
          <path d="M6 13c1-10 19-10 20 0-5-3-15-3-20 0z" fill="#1c1412" />
          <path d="M9 16h6M17 16h6" stroke="#222" strokeWidth={1.500} />
          <path d="M11 25c3 3 7 3 10 0" stroke="#2d1e1a" strokeWidth={2} fill="none" />
        </svg>
      );
    case 'sc':
      return (
        <SquareIcon $bg="#e07a2c" $color="#f6e4d2" $size={20}>
          SC
        </SquareIcon>
      );
    case 'bin':
      return (
        <svg width={32} height={32} viewBox="0 0 32 32">
          <rect width={32} height={32} fill="#000" />
          <path d="M6 6h20M8 8v19h16V8" fill="none" stroke="#fff" strokeWidth={2.500} />
          <path d="M12 10v15M16 10v15M20 10v15" stroke="#fff" strokeWidth={2} />
        </svg>
      );
    case 'onenote':
      return (
        <SquareIcon $bg="#7b2fa8" $color="#fff" $size={16}>
          N
        </SquareIcon>
      );
    case 'ls':
      return (
        <svg width={32} height={32} viewBox="0 0 32 32">
          <rect x={1} y={1} width={30} height={30} rx={2} fill="#20262c" stroke="#9aa" strokeWidth={2} />
          <text x={16} y={23} textAnchor="middle" fill="#e8e8e8" fontSize={19} fontFamily="Liberation Serif">
            Ls
          </text>
        </svg>
      );
    case 'gem':
      return (
        <svg width={32} height={32} viewBox="0 0 32 32">
          <path d="M16 1l11 12-11 6L5 13z" fill="#3f7fe0" />
          <ellipse cx={16} cy={23} rx={7} ry={8} fill="#a9c8f5" />
        </svg>
      );
    case 'bplus':
      return (
        <svg width={32} height={32} viewBox="0 0 32 32">
          <circle cx={16} cy={16} r={16} fill="#3ea34a" />
          <text x={16} y={21} textAnchor="middle" fill="#fff" fontSize={14} fontWeight={700} fontFamily="Roboto">
            B+
          </text>
        </svg>
      );
    case 'w':
      return (
        <svg width={32} height={32} viewBox="0 0 32 32">
          <text x={16} y={26} textAnchor="middle" fill="#2aa7dd" fontSize={28} fontWeight={700} fontFamily="Roboto">
            W
          </text>
        </svg>
      );
    case 'edit':
      return (
        <svg width={32} height={32} viewBox="0 0 32 32">
          <rect x={2} y={5} width={26} height={26} fill="#000" />
          <rect x={6} y={9} width={18} height={18} fill="none" stroke="#fff" strokeWidth={2} />
          <path d="M14 20L28 3" stroke="#fff" strokeWidth={3} />
          <path d="M15 22L29 4" stroke="#000" strokeWidth={1} />
        </svg>
      );
    case 'pin':
      return (
        <RoundBrand $bg="#d7282f" $color="#fff" $size={32}>
          <FaPinterestP size={22} />
        </RoundBrand>
      );
    case 'b':
      return (
        <svg width={32} height={32} viewBox="0 0 32 32">
          <text x={15} y={27} textAnchor="middle" fill="#111" stroke="#fff" strokeWidth={1.500} fontSize={34} fontStyle="italic" fontFamily="Liberation Serif">
            B
          </text>
        </svg>
      );
    case 's':
      return (
        <svg width={28} height={32} viewBox="0 0 28 32">
          <rect x={1} y={1} width={26} height={30} fill="#3a3a3a" stroke="#777" strokeWidth={1.500} />
          <circle cx={14} cy={16} r={11} fill="#f08a2c" />
          <text x={14} y={22} textAnchor="middle" fill="#fff" fontSize={16} fontWeight={700} fontFamily="Roboto">
            S
          </text>
        </svg>
      );
    case 'fb':
      return (
        <SquareIcon $bg="#3b5998" $color="#fff" $size={20}>
          <FaFacebookF size={24} />
        </SquareIcon>
      );
    default:
      return (
        <svg width={30} height={34} viewBox="0 0 30 34">
          <defs>
            <radialGradient id="sphere" cx="0.4" cy="0.3">
              <stop offset="0" stopColor="#fff" />
              <stop offset="1" stopColor="#222" />
            </radialGradient>
          </defs>
          <circle cx={21} cy={9} r={9} fill="url(#sphere)" />
          <circle cx={10} cy={15} r={9} fill="url(#sphere)" />
          <circle cx={20} cy={25} r={9} fill="url(#sphere)" />
        </svg>
      );
  }
};

const dockLeft = ['finder', 'term', 'rocket', 'prefs', 'cal', 'typora', 'r', 'notion', 'heat', 'orange', 'gram', 'photos', 'notes', 'firefox', 'podcast'];
const dockMid = ['spotify', 'excel', 'office', 'r'];
const running = ['finder', 'term', 'firefox', 'spotify', 'excel', 'office', 'r2'];

const DockIcon = ({ k }: { k: string }) => {
  switch (k) {
    case 'finder':
      return (
        <svg width={62} height={58} viewBox="0 0 62 58">
          <rect width={62} height={58} rx={3} fill="#f1f3f6" />
          <path d="M3 0h29c-4 12-6 22-7 33h6c0 9 0 17 2 25H3a3 3 0 0 1-3-3V3a3 3 0 0 1 3-3z" fill="#2d8bea" />
          <path d="M18 12v6M46 12v6" stroke="#1a1a24" strokeWidth={2.500} />
          <path d="M11 34c10 12 30 12 40 0" fill="none" stroke="#1a1a24" strokeWidth={2.500} />
        </svg>
      );
    case 'term':
      return (
        <svg width={66} height={58} viewBox="0 0 66 58">
          <rect x={1} y={1} width={64} height={56} rx={3} fill="#1d1d1f" stroke="#808086" />
          <rect x={1} y={1} width={64} height={4} fill="#555" />
          <path d="M9 11l7 4-7 4" fill="none" stroke="#fff" strokeWidth={2} />
          <path d="M18 21h7" stroke="#fff" strokeWidth={2} />
        </svg>
      );
    case 'rocket':
      return (
        <svg width={66} height={66} viewBox="0 0 66 66">
          <defs>
            <linearGradient id="padg" x1="0" y1="0" x2="0" y2="1">
              <stop offset="0" stopColor="#d9dbde" />
              <stop offset="1" stopColor="#77797d" />
            </linearGradient>
          </defs>
          <circle cx={33} cy={33} r={33} fill="url(#padg)" />
          <path d="M47 12c2 12-2 25-10 31l-5 9-3-9-5-6-9 3 8-9c5-11 14-17 24-19z" fill="#3e4045" />
          <circle cx={38} cy={24} r={3} fill="#8a8c90" />
        </svg>
      );
    case 'prefs':
      return (
        <svg width={66} height={62} viewBox="0 0 66 62">
          <rect width={66} height={62} rx={3} fill="#b8c2c8" />
          <circle cx={33} cy={31} r={27} fill="#3a3a3c" />
          <circle cx={33} cy={31} r={21} fill="none" stroke="#9a9a9c" strokeWidth={6} strokeDasharray="4 3" />
          <circle cx={33} cy={31} r={14} fill="#555" />
          <path d="M33 31V17M33 31l12 9M33 31l-12 9" stroke="#a6a6a8" strokeWidth={4} />
        </svg>
      );
    case 'cal':
      return (
        <svg width={64} height={64} viewBox="0 0 64 64">
          <path d="M2 12l56-10 6 48-56 12z" fill="#666" />
          <path d="M0 10L54 2l5 46-54 10z" fill="#fff" />
          <path d="M0 10L54 2l1.500 14-54 7z" fill="#d9534a" />
          <text x={28} y={15} textAnchor="middle" fill="#fff" fontSize={10} fontFamily="Roboto" transform="rotate(-7 28 15)">
            AUG
          </text>
          <text x={30} y={44} textAnchor="middle" fill="#222" fontSize={24} fontWeight={300} fontFamily="Roboto" transform="rotate(-7 30 44)">
            14
          </text>
        </svg>
      );
    case 'typora':
      return (
        <svg width={74} height={74} viewBox="0 0 74 74">
          <rect x={6} y={6} width={60} height={60} fill="#cfcfcf" transform="rotate(-12 36 36)" />
          <rect x={8} y={8} width={60} height={60} fill="#f4f4f4" transform="rotate(-5 38 38)" />
          <text x={38} y={52} textAnchor="middle" fill="#222" fontSize={38} fontFamily="Liberation Serif">
            T
          </text>
        </svg>
      );
    case 'r':
      return (
        <svg width={76} height={76} viewBox="0 0 76 76">
          <circle cx={38} cy={38} r={38} fill="#7faad8" />
          <text x={38} y={54} textAnchor="middle" fill="#fff" fontSize={44} fontFamily="Liberation Serif">
            R
          </text>
        </svg>
      );
    case 'notion':
      return (
        <NotionBox>
          <SiNotion size={70} />
        </NotionBox>
      );
    case 'heat':
      return (
        <svg width={62} height={76} viewBox="0 0 62 76">
          <defs>
            <filter id="blur" x="-20%" y="-20%" width="140%" height="140%">
              <feGaussianBlur stdDeviation="1.600" />
            </filter>
          </defs>
          <g filter="url(#blur)">
            <path d="M22 4c10 0 11 16 11 28 0 8-8 12-10 20-2 8-6 20-12 20S3 60 7 48c4-10 5-20 5-30 0-8 2-14 10-14z" fill="#2fb4d8" stroke="#2fb4d8" strokeWidth={5} />
            <path d="M34 30c8 0 6 10 14 14 8 4 10 14 6 16s-10-4-16-10-10-16-4-20z" fill="#2fb4d8" stroke="#2fb4d8" strokeWidth={4} />
            <path d="M22 10c7 0 8 12 6 24-2 5-12 4-12-6 0-8 0-18 6-18z" fill="#f2d93a" />
            <path d="M22 14c5 0 6 10 4 18-2 4-8 3-8-4 0-6 0-14 4-14z" fill="#e6352c" />
            <path d="M12 46c4 0 3 16-2 18-4-2-2-16 2-18z" fill="#f2d93a" />
            <path d="M42 38c5 2 8 10 5 11s-10-6-5-11z" fill="#f2d93a" />
          </g>
        </svg>
      );
    case 'orange':
      return (
        <svg width={66} height={70} viewBox="0 0 66 70">
          <ellipse cx={33} cy={36} rx={32} ry={34} fill="#ee9a33" />
          <circle cx={20} cy={30} r={11} fill="#dfe4ec" stroke="#2a2a2a" strokeWidth={5} />
          <circle cx={46} cy={30} r={11} fill="#dfe4ec" stroke="#2a2a2a" strokeWidth={5} />
          <circle cx={20} cy={30} r={4} fill="#333" />
          <circle cx={46} cy={30} r={4} fill="#333" />
          <path d="M14 46c8 10 30 10 38 0-8 16-30 16-38 0z" fill="#f5e4a8" />
        </svg>
      );
    case 'gram':
      return (
        <svg width={76} height={76} viewBox="0 0 76 76">
          <circle cx={38} cy={38} r={38} fill="#4fb08a" />
          <path d="M56 24A24 24 0 1 0 60 48H44M60 48v12" fill="none" stroke="#fff" strokeWidth={5} />
        </svg>
      );
    case 'photos':
      return (
        <svg width={72} height={72} viewBox="0 0 72 72">
          <circle cx={36} cy={36} r={36} fill="#f2f2f2" />
          {['#f3a93c', '#f7d94c', '#9ccc65', '#58b68a', '#6cb5e2', '#7a8ed8', '#b07ac8', '#e36a6a'].map((c, i) => (
            <ellipse key={c} cx={36} cy={19} rx={10} ry={16} fill={c} opacity={0.85} transform={`rotate(${i * 45} 36 36)`} />
          ))}
        </svg>
      );
    case 'notes':
      return (
        <svg width={62} height={70} viewBox="0 0 62 70">
          <path d="M0 10L50 0l12 60-50 10z" fill="#fbfaf4" />
          <path d="M0 10L50 0l2.500 11L2 21z" fill="#f7ce4e" />
          {[0, 1, 2, 3, 4, 5, 6].map((i) => (
            <path key={i} d={`M${3 + i * 1.300} ${27 + i * 6}L${53 + i * 1.300} ${17 + i * 6}`} stroke="#dad8cf" strokeWidth={1} />
          ))}
        </svg>
      );
    case 'firefox':
      return (
        <svg width={68} height={70} viewBox="0 0 68 70">
          <defs>
            <linearGradient id="ffg" x1="0.7" y1="0" x2="0.3" y2="1">
              <stop offset="0" stopColor="#ffd23a" />
              <stop offset="0.5" stopColor="#ff7a2c" />
              <stop offset="1" stopColor="#e0277a" />
            </linearGradient>
          </defs>
          <path d="M34 70C14 70 0 54 0 36c0-8 2-14 5-20 1 3 2 5 4 6 2-6 6-11 12-14 0 4 2 7 6 9 3-2 9-1 12 2 0-7 4-14 10-19-1 8 4 12 9 18 6 6 10 14 10 24 0 17-14 28-34 28z" fill="url(#ffg)" />
          <circle cx={34} cy={40} r={15} fill="#6a3dc4" />
          <path d="M14 26c6-6 16-8 24-4-4 2-10 4-10 8-4 2-10 0-14-4z" fill="#ff9a2c" />
        </svg>
      );
    case 'podcast':
      return (
        <svg width={68} height={68} viewBox="0 0 68 68">
          <circle cx={34} cy={34} r={34} fill="#9b51d8" />
          <g fill="none" stroke="#fff" strokeWidth={2.500}>
            <circle cx={34} cy={30} r={20} />
            <circle cx={34} cy={30} r={13} />
          </g>
          <circle cx={34} cy={30} r={6} fill="#fff" />
          <rect x={29} y={39} width={10} height={22} rx={5} fill="#fff" />
        </svg>
      );
    case 'spotify':
      return (
        <RoundBrand $bg="#191414" $color="#5cd26e" $size={70}>
          <FaSpotify size={70} />
        </RoundBrand>
      );
    case 'excel':
      return (
        <svg width={66} height={62} viewBox="0 0 66 62">
          <rect x={16} y={0} width={50} height={62} rx={3} fill="#2f7d4f" />
          <rect x={41} y={0} width={25} height={16} fill="#60c38a" />
          <rect x={41} y={16} width={25} height={15} fill="#45a66f" />
          <rect x={16} y={16} width={25} height={15} fill="#34895a" />
          <rect x={16} y={46} width={50} height={16} fill="#1f5b3a" />
          <rect x={0} y={13} width={34} height={36} rx={3} fill="#1e6e42" />
          <text x={17} y={39} textAnchor="middle" fill="#fff" fontSize={26} fontFamily="Liberation Sans">
            X
          </text>
        </svg>
      );
    case 'office':
      return (
        <svg width={62} height={76} viewBox="0 0 62 76">
          <path d="M2 1h32l26 38v35H2z" fill="#f4f4f4" stroke="#48484a" strokeWidth={3} />
          <path d="M42 0h20v28z" fill="#58585a" />
        </svg>
      );
    case 'folder':
      return (
        <svg width={66} height={62} viewBox="0 0 66 62">
          <path d="M6 0h12l3 4h30l2 6h6v14H6z" fill="#3d7ea6" />
          <path d="M3 10h12l3 4h40l2 6v8H3z" fill="#4f93bb" />
          <rect y={20} width={66} height={42} rx={3} fill="#69acd4" />
        </svg>
      );
    default:
      return (
        <svg width={56} height={72} viewBox="0 0 56 72">
          <defs>
            <linearGradient id="trash" x1="0" y1="0" x2="0" y2="1">
              <stop offset="0" stopColor="#6b6e72" />
              <stop offset="1" stopColor="#3c3d40" />
            </linearGradient>
          </defs>
          <path d="M0 10h56l-6 56c0 3-4 6-8 6H14c-4 0-8-3-8-6z" fill="url(#trash)" />
          <ellipse cx={28} cy={10} rx={28} ry={9} fill="#888b90" />
          <path d="M8 12l8-9 8 6 8-7 8 7 8-4-2 8H10z" fill="#e6e6e6" />
        </svg>
      );
  }
};

const Slot = ({ k, dotKey }: { k: string; dotKey?: string }) => (
  <DockSlot>
    <DockBox>
      <DockIcon k={k} />
    </DockBox>
    <DockDot $on={running.includes(dotKey ?? k)} />
  </DockSlot>
);

const overall = [
  { lines: ['OVERALL', 'SCORE'], value: '65.3' },
  { lines: ['OVERALL', 'RANK'], value: '101' },
  { lines: ['SPILLOVER', 'SCORE'], value: '97.6' },
];

const navLinks = ['Rankings', 'Interactive Map', 'Key Messages', 'Country Profiles', 'Data Explorer', 'Download Report & Materials'];

const menus = ['File', 'Edit', 'View', 'History', 'Bookmarks', 'Tools', 'Window', 'Help'];

const exts = ['download', 'library', 'sidebar', 'avatar', 'sc', 'bin', 'onenote', 'ls', 'gem', 'bplus', 'w', 'edit', 'pin', 'b', 's', 'fb', 'balls'];

const App: React.FC = () => {
  return (
    <Desktop>
      <GlobalStyle />

      <MenuBar>
        <FaApple size={32} />
        <MenuList>
          <AppName>Firefox</AppName>
          {menus.map((m) => (
            <span key={m}>{m}</span>
          ))}
        </MenuList>
        <Status>
          <StatusItem $ml={0}>
            <svg width={32} height={34} viewBox="0 0 32 34" fill="none" stroke="#fff" strokeWidth={2.400}>
              <circle cx={16} cy={17} r={14} />
              <path d="M6 10c8-6 20-2 20 8 0 6-6 9-10 7s-4-9 1-10" />
            </svg>
          </StatusItem>
          <StatusItem $ml={17}>
            <Bluetooth size={30} color="#6f7386" />
          </StatusItem>
          <StatusItem $ml={28}>
            <Wifi size={36} color="#fff" strokeWidth={2.500} />
          </StatusItem>
          <StatusItem $ml={25}>
            <svg width={18} height={26} viewBox="0 0 18 26" fill="#fff">
              <path d="M0 8h6l12-8v26L6 18H0z" />
            </svg>
          </StatusItem>
          <StatusItem $ml={46} $small>
            85%
          </StatusItem>
          <StatusItem $ml={9}>
            <svg width={46} height={26} viewBox="0 0 46 26">
              <rect x={1} y={1} width={40} height={24} rx={5} fill="none" stroke="#fff" strokeWidth={2} />
              <rect x={4} y={4} width={30} height={18} rx={2} fill="#fff" />
              <rect x={43} y={8} width={3} height={10} rx={1} fill="#fff" />
            </svg>
          </StatusItem>
          <StatusItem $ml={32}>Fri 07.35</StatusItem>
          <StatusItem $ml={44}>
            <Search size={30} color="#fff" strokeWidth={2.500} />
          </StatusItem>
          <StatusItem $ml={36}>
            <svg width={32} height={32} viewBox="0 0 32 32">
              <defs>
                <linearGradient id="siri" x1="0" y1="0" x2="1" y2="1">
                  <stop offset="0" stopColor="#4ac6f0" />
                  <stop offset="0.5" stopColor="#b45be0" />
                  <stop offset="1" stopColor="#f078b0" />
                </linearGradient>
              </defs>
              <circle cx={16} cy={16} r={15} fill="url(#siri)" stroke="#fff" strokeWidth={2} />
              <path d="M6 20L26 12M12 8l8 16" stroke="#fff" strokeWidth={2.500} />
            </svg>
          </StatusItem>
          <StatusItem $ml={22}>
            <svg width={36} height={26} viewBox="0 0 36 26" fill="#fff">
              <rect width={6} height={5} />
              <rect x={10} width={26} height={5} />
              <rect y={10} width={6} height={5} />
              <rect x={10} y={10} width={26} height={5} />
              <rect y={20} width={6} height={5} />
              <rect x={10} y={20} width={26} height={5} />
            </svg>
          </StatusItem>
        </Status>
      </MenuBar>

      <BrowserWindow>
        <TabStrip>
          <Lights>
            <Light $c="#f2695c" />
            <Light $c="#f7bd45" />
            <Light $c="#5fc454" />
          </Lights>
          <Tab>
            <Favicon kind="whatsapp" />
            <TabTitle>(18) WhatsApp</TabTitle>
            <svg width={30} height={30} viewBox="0 0 30 30" fill="none" stroke="#c4c4c4" strokeWidth={2}>
              <path d="M4 11h5l8-7v22l-8-7H4z" fill="#c4c4c4" />
              <path d="M21 10c2 3 2 7 0 10" />
              <path d="M3 28L22 2" stroke="#0c0c0c" strokeWidth={5} />
              <path d="M3 28L22 2" />
            </svg>
            <X size={24} color="#fff" strokeWidth={3} />
          </Tab>
          <Tab>
            <Favicon kind="hex" />
            <TabTitle $fade>"institut tekno... Public</TabTitle>
            <X size={24} color="#fff" strokeWidth={3} />
          </Tab>
          <Tab>
            <Favicon kind="biblio" />
            <TabTitle>Biblioshiny</TabTitle>
            <X size={24} color="#fff" strokeWidth={3} />
          </Tab>
          <Tab $noIcon>
            <TabTitle>biblioshiny for bibliometrix</TabTitle>
            <X size={24} color="#fff" strokeWidth={3} />
          </Tab>
          <Tab>
            <Favicon kind="un" />
            <TabTitle $fade>About the Sustainable</TabTitle>
            <X size={24} color="#fff" strokeWidth={3} />
          </Tab>
          <Tab $active>
            <TabTitle $fade>Sustainable Development R</TabTitle>
            <X size={24} color="#fff" strokeWidth={3} />
          </Tab>
          <Tab>
            <Favicon kind="r" />
            <TabTitle $fade>RPubs - How to add an</TabTitle>
            <X size={24} color="#fff" strokeWidth={3} />
          </Tab>
          <NewTab>+</NewTab>
        </TabStrip>

        <Toolbar>
          <BackButton>
            <svg width={34} height={30} viewBox="0 0 34 30" fill="none" stroke="#8f8f91" strokeWidth={3.500}>
              <path d="M33 15H3M16 2L3 15l13 13" />
            </svg>
          </BackButton>
          <ToolSlot>
            <svg width={34} height={30} viewBox="0 0 34 30" fill="none" stroke="#c9c9cb" strokeWidth={3.500}>
              <path d="M1 15h30M18 2l13 13-13 13" />
            </svg>
          </ToolSlot>
          <ToolSlot>
            <RotateCw size={34} strokeWidth={2.800} />
          </ToolSlot>
          <ToolSlot>
            <House size={36} strokeWidth={2.800} />
          </ToolSlot>
          <UrlBar>
            <svg width={26} height={30} viewBox="0 0 26 30" fill="none" stroke="#c9c9cb" strokeWidth={3}>
              <path d="M13 2l11 3v10c0 7-6 11-11 13C8 26 2 22 2 15V5z" />
              <path d="M13 7v16" strokeWidth={5} />
            </svg>
            <UrlDivider $ml={14} $mr={18} />
            <svg width={22} height={28} viewBox="0 0 22 28" fill="#c9c9cb">
              <rect x={0} y={12} width={22} height={16} rx={2} />
              <path d="M4 13V8a7 7 0 0 1 14 0v5" fill="none" stroke="#c9c9cb" strokeWidth={3} />
            </svg>
            <UrlText>
              https://dashboards.<b>sdgindex.org</b>/profiles/idn
            </UrlText>
            <ZoomPill>67%</ZoomPill>
            <UrlDivider $ml={24} $mr={0} />
            <Dots>
              <i />
              <i />
              <i />
            </Dots>
            <UrlGlyph $ml={8}>
              <svg width={30} height={30} viewBox="0 0 30 30" fill="none" stroke="#c9c9cb" strokeWidth={3}>
                <path d="M2 4h26v11a13 13 0 0 1-26 0z" />
                <path d="M9 12l6 6 6-6" />
              </svg>
            </UrlGlyph>
            <UrlGlyph $ml={23}>
              <svg width={30} height={30} viewBox="0 0 30 30" fill="none" stroke="#c9c9cb" strokeWidth={3}>
                <path d="M15 3l3.600 8 8.400 1-6 6 1.500 9L15 22.500 7.500 27 9 18l-6-6 8.400-1z" />
              </svg>
            </UrlGlyph>
          </UrlBar>
          <ExtList>
            {exts.map((e) => (
              <ToolSlot key={e}>
                <ExtIcon k={e} />
              </ToolSlot>
            ))}
          </ExtList>
          <Separator />
          <Burger>
            <i />
            <i />
            <i />
          </Burger>
        </Toolbar>

        <SiteNav>
          <Logo>
            <LogoMark />
            <LogoWords>
              <LogoWord>SUSTAINABLE</LogoWord>
              <LogoWord>DEVELOPMENT</LogoWord>
              <LogoWord>REPORT</LogoWord>
            </LogoWords>
          </Logo>
          <NavLinks>
            {navLinks.map((l) => (
              <span key={l}>{l}</span>
            ))}
          </NavLinks>
        </SiteNav>

        <Page>
          <CountryHeader>
            <CountryInfo>
              <CountryName>Indonesia</CountryName>
              <Region>East and South Asia</Region>
              <Tabs>
                <PageTab $active>OVERVIEW</PageTab>
                <PageTab>INDICATORS</PageTab>
              </Tabs>
            </CountryInfo>
            <FlagDisc />
          </CountryHeader>

          <Body>
            <Section $mt={43}>
              <Heading>Overall</Heading>
              <Sub>Click on an assessment to view more information.</Sub>
              <OverallRow>
                {overall.map((o) => (
                  <Card key={o.value}>
                    <CardHead>
                      <svg width={15} height={15} viewBox="0 0 15 15" fill="#111">
                        <path d="M5.500 0h4v5.500H15v4H9.500V15h-4V9.500H0v-4h5.500z" />
                      </svg>
                      <CardLabel>
                        {o.lines.map((l) => (
                          <CardLine key={l}>{l}</CardLine>
                        ))}
                      </CardLabel>
                    </CardHead>
                    <CardValue>{o.value}</CardValue>
                  </Card>
                ))}
              </OverallRow>
            </Section>

            <Section $mt={44}>
              <Heading>Current Assessment</Heading>
              <Sub>Click on a goal to view more information.</Sub>
              <GoalGrid>
                {goals.map((g) => (
                  <GoalTile key={g.n} goal={g} />
                ))}
              </GoalGrid>
              <Legend>
                <LegendTitle>Legend:</LegendTitle>
                <LegendItem $gap={14}>
                  <LegendDot $c={GREEN} />
                  SDG achieved
                </LegendItem>
                <LegendItem $gap={15}>
                  <LegendDot $c={YELLOW} />
                  Challenges remain
                </LegendItem>
                <LegendItem $gap={15}>
                  <LegendDot $c={ORANGE} />
                  Significant challenges remain
                </LegendItem>
                <LegendItem $gap={17}>
                  <LegendDot $c={RED} />
                  Major challenges remain
                </LegendItem>
                <LegendItem $gap={0}>
                  <LegendDot $c={GREY} />
                  Information unavailable
                </LegendItem>
              </Legend>
            </Section>

            <Section $mt={46}>
              <Heading>Trends</Heading>
              <Sub>Click on a trend to view more information.</Sub>
              <GoalGrid>
                {goals.map((g) => (
                  <GoalTile key={g.n} goal={g} trendMode />
                ))}
              </GoalGrid>
              <Legend>
                <LegendTitle>Legend:</LegendTitle>
                <LegendItem $gap={18}>
                  <svg width={18} height={20} viewBox="0 0 18 20" fill={GREEN}>
                    <path d="M9 0l9 10-3 2-4-4v12H7V8l-4 4-3-2z" />
                  </svg>
                  On track or maintaining SDG achievement
                </LegendItem>
                <LegendItem $gap={18}>
                  <svg width={16} height={20} viewBox="0 0 16 20" fill={YELLOW}>
                    <path d="M1 1h14v15h-5V9l-6 9-4-4 7-8H1z" />
                  </svg>
                  Moderately improving
                </LegendItem>
                <LegendItem $gap={9}>
                  <svg width={20} height={20} viewBox="0 0 20 20" fill={ORANGE}>
                    <path d="M20 10L10 20l-2-3 4-4H0V7h12L8 3l2-3z" />
                  </svg>
                  Stagnating
                </LegendItem>
                <LegendItem $gap={14}>
                  <svg width={18} height={20} viewBox="0 0 18 20" fill={RED}>
                    <path d="M9 20L0 10l3-2 4 4V0h4v12l4-4 3 2z" />
                  </svg>
                  Decreasing
                </LegendItem>
                <LegendItem $gap={0}>
                  <svg width={18} height={20} viewBox="0 0 18 20" fill={GREY}>
                    <circle cx={4} cy={10} r={3.500} />
                    <circle cx={14} cy={10} r={3.500} />
                  </svg>
                  Trend information unavailable
                </LegendItem>
              </Legend>
            </Section>
          </Body>
        </Page>
      </BrowserWindow>

      <DockArea>
        <DockPanel>
          {dockLeft.map((k) => (
            <Slot key={k} k={k} />
          ))}
          <DockDivider />
          {dockMid.map((k) => (
            <Slot key={k} k={k} dotKey={k === 'r' ? 'r2' : k} />
          ))}
          <DockDivider />
          <Slot k="folder" />
          <Slot k="trash" />
        </DockPanel>
      </DockArea>
    </Desktop>
  );
};

export default App;
